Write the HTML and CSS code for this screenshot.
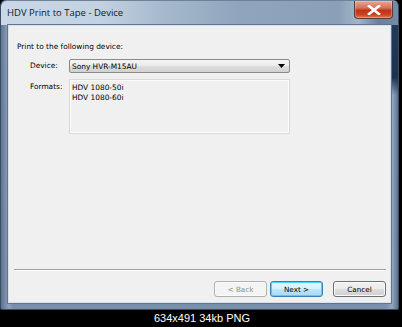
FILE: index.html
```html
<!DOCTYPE html>
<html>
<head>
<meta charset="utf-8">
<link rel="stylesheet" href="styles.css">
</head>
<body>
<div class="shot">
  <div class="window">
    <div class="titlebar">
      <span class="title">HDV Print to Tape - Device</span>
      <div class="close">
        <svg width="14" height="10" viewBox="0 0 14 10"><path d="M2 1 L12 9 M12 1 L2 9" stroke="#fff" stroke-width="2.6" stroke-linecap="square"/></svg>
      </div>
    </div>
    <div class="client">
      <div class="heading">Print to the following device:</div>
      <div class="row">
        <span class="label">Device:</span>
        <div class="combo">
          <span>Sony HVR-M15AU</span>
          <svg class="arrow" width="7" height="4" viewBox="0 0 7 4"><path d="M0 0 H7 L3.5 4 Z" fill="#000"/></svg>
        </div>
      </div>
      <div class="row formats">
        <span class="label">Formats:</span>
        <div class="list">
          <div class="item">HDV 1080-50i</div>
          <div class="item">HDV 1080-60i</div>
        </div>
      </div>
      <div class="spacer"></div>
      <div class="separator"></div>
      <div class="buttons">
        <div class="btn disabled">&lt; Back</div>
        <div class="btn default">Next &gt;</div>
        <div class="btn cancel">Cancel</div>
      </div>
    </div>
  </div>
  <div class="caption">634x491 34kb PNG</div>
</div>
</body>
</html>
```
FILE: styles.css
```css
html, body {
  margin: 0;
  padding: 0;
  background: #000;
}
.shot {
  width: 402px;
  height: 327px;
  display: flex;
  flex-direction: column;
  background: #000;
  overflow: hidden;
}
.window {
  width: 399px;
  height: 310px;
  box-sizing: border-box;
  padding: 0 7px 6px 7px;
  border-radius: 6px 6px 2px 2px;
  border: 1px solid #3a4c63;
  border-top-color: #6f8197;
  background:
    linear-gradient(90deg, rgba(40,60,90,0.35) 0, rgba(255,255,255,0.15) 2%, rgba(255,255,255,0) 3%, rgba(255,255,255,0) 97%, rgba(255,255,255,0.2) 98.5%, rgba(20,40,70,0.3) 100%),
    linear-gradient(180deg, #9fb3c9 0, #7f97b3 8%, #7990ad 100%);
  display: flex;
  flex-direction: column;
  position: relative;
}
.window::before {
  content: "";
  position: absolute;
  left: 0; top: 0; right: 0; height: 24px;
  border-radius: 6px 6px 0 0;
  background: linear-gradient(90deg, #c9d7e6 0, #c3d2e2 25%, #a7bacd 40%, #8fa5bd 60%, #8aa0b8 85%, #a3b5c8 90%, #6b7f98 95%, #788da5 100%);
}
.window::after {
  content: "";
  position: absolute;
  right: 0; top: 24px; width: 7px; height: 70px;
  background: linear-gradient(180deg, #23395a 0, #1c324f 75%, rgba(28,50,79,0) 100%);
}
.titlebar {
  height: 24px;
  flex: none;
  display: flex;
  align-items: flex-start;
  position: relative;
  z-index: 1;
}
.title {
  margin-left: -1px;
  margin-top: 5px;
  font-family: "Open Sans", "Noto Sans", sans-serif;
  font-size: 9.5px;
  line-height: 14px;
  color: #0d1b2b;
}
.close {
  margin-left: auto;
  margin-right: -2px;
  width: 39px;
  height: 18px;
  box-sizing: border-box;
  border: 1px solid #5b3a3a;
  border-top: none;
  border-radius: 0 0 4px 4px;
  background: linear-gradient(180deg, #e9a596 0, #d6735c 40%, #c2321a 55%, #c9431f 80%, #e07a55 100%);
  display: flex;
  align-items: center;
  justify-content: center;
  box-shadow: inset 0 0 0 1px rgba(255,255,255,0.25);
}
.client {
  flex: 1;
  background: #f0f0f0;
  border: 1px solid #d8e1eb;
  box-shadow: 0 0 0 1px #5f7590;
  display: flex;
  flex-direction: column;
  padding: 16px 4px 5px 0;
  font-family: "DejaVu Sans", sans-serif;
  font-size: 7.4px;
  color: #000;
  position: relative;
  z-index: 1;
}
.heading {
  margin-left: 8px;
  line-height: 10px;
  height: 10px;
}
.row {
  display: flex;
  margin-top: 7px;
  margin-left: 21px;
}
.row.formats {
  margin-top: 6px;
}
.label {
  width: 39px;
  flex: none;
  line-height: 14px;
}
.formats .label {
  line-height: 16px;
}
.combo {
  width: 221px;
  height: 14px;
  box-sizing: border-box;
  border: 1px solid #8a8a8a;
  border-radius: 2px;
  background: linear-gradient(180deg, #f4f4f4 0, #ececec 45%, #dcdcdc 55%, #d2d2d2 100%);
  display: flex;
  align-items: center;
  padding: 0 4px 0 2px;
}
.combo span {
  flex: 1;
}
.arrow {
  flex: none;
}
.list {
  width: 221px;
  height: 55px;
  box-sizing: border-box;
  border: 1px solid #dadada;
  box-shadow: inset 0 0 0 1px #fbfbfb;
  background: #f0f0f0;
  padding: 3px 2px;
}
.item {
  line-height: 10px;
}
.spacer {
  flex: 1;
}
.separator {
  margin-left: 5px;
  height: 1px;
  background: #a0a0a0;
  border-bottom: 1px solid #ffffff;
}
.buttons {
  margin-top: 10px;
  display: flex;
  justify-content: flex-end;
}
.btn {
  width: 53px;
  height: 16px;
  box-sizing: border-box;
  border: 1px solid #707070;
  border-radius: 3px;
  display: flex;
  align-items: center;
  justify-content: center;
  font-size: 7.2px;
  background: linear-gradient(180deg, #f2f2f2 0, #ebebeb 48%, #dddddd 52%, #cfcfcf 100%);
  box-shadow: inset 0 0 0 1px #fafafa;
}
.btn.disabled {
  color: #8d8d8d;
  border-color: #adb2b5;
  background: #f4f4f4;
}
.btn.default {
  margin-left: 3px;
  border-color: #3c7fb1;
  background: linear-gradient(180deg, #eaf6fd 0, #d9f0fc 48%, #bee6fd 52%, #a7d9f5 100%);
  box-shadow: inset 0 0 0 1px #48d4ff;
}
.btn.cancel {
  margin-left: 10px;
}
.caption {
  flex: 1;
  text-align: center;
  color: #fff;
  font-family: "Liberation Sans", Arial, sans-serif;
  font-size: 11px;
  line-height: 17px;
  padding-left: 2px;
}
```
